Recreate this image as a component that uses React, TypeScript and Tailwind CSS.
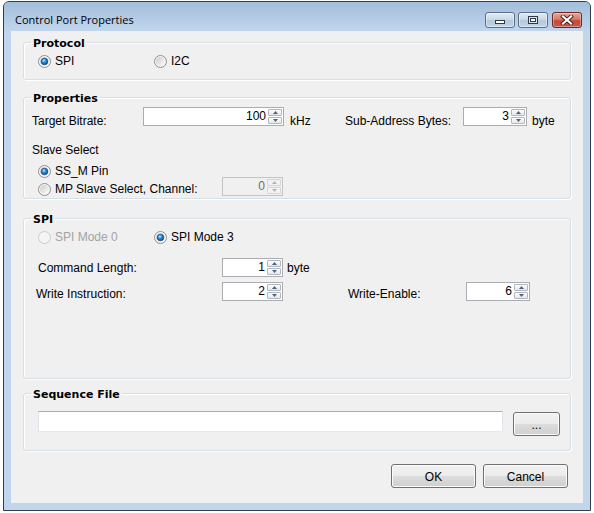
import React from "react";

type RadioProps = { checked?: boolean; disabled?: boolean };

function RadioGlyph({ checked, disabled }: RadioProps) {
  return (
    <svg width="13" height="13" viewBox="0 0 13 13" className="shrink-0">
      <defs>
        <linearGradient id="rb-face" x1="0" y1="0" x2="1" y2="1">
          <stop offset="0" stopColor="#cbcbcb" />
          <stop offset="1" stopColor="#fdfdfd" />
        </linearGradient>
        <radialGradient id="rb-dot" cx="0.4" cy="0.35" r="0.75">
          <stop offset="0" stopColor="#b9ecff" />
          <stop offset="0.4" stopColor="#2a8fe0" />
          <stop offset="1" stopColor="#0a3a78" />
        </radialGradient>
      </defs>
      <circle
        cx="6.5"
        cy="6.5"
        r="6"
        fill={disabled ? "#f4f4f4" : "#f6f6f6"}
        stroke={disabled ? "#cacaca" : "#8e8f8f"}
      />
      {!disabled && <circle cx="6.5" cy="6.5" r="4.5" fill="url(#rb-face)" />}
      {checked && (
        <circle cx="6.5" cy="6.5" r="3.3" fill="url(#rb-dot)" stroke="#1b3e6c" strokeWidth="0.7" />
      )}
    </svg>
  );
}

function Radio({
  label,
  checked,
  disabled,
  className = "",
}: RadioProps & { label: string; className?: string }) {
  return (
    <div className={`flex h-[13px] items-center gap-[4px] ${className}`}>
      <RadioGlyph checked={checked} disabled={disabled} />
      <span className={`leading-[13px] ${disabled ? "text-[#a3a3a3]" : ""}`}>{label}</span>
    </div>
  );
}

function Arrow({ up, disabled }: { up?: boolean; disabled?: boolean }) {
  return (
    <svg width="5" height="3" viewBox="0 0 5 3">
      <path d={up ? "M2.5 0 5 3H0z" : "M0 0h5L2.5 3z"} fill={disabled ? "#b5b5b5" : "#4d6185"} />
    </svg>
  );
}

function Spinner({
  value,
  className,
  disabled,
}: {
  value: string;
  className: string;
  disabled?: boolean;
}) {
  const half = disabled
    ? "border-[#d6d6d6] bg-[#f2f2f2]"
    : "border-[#b2b6bd] bg-[linear-gradient(#fdfdfd,#e4e7eb)]";
  return (
    <div
      className={`flex h-[19px] shrink-0 border ${
        disabled ? "border-[#c4c4c4] bg-[#f0f0f0] text-[#6d6d6d]" : "border-[#abadb3] bg-white"
      } ${className}`}
    >
      <div className="flex-1 pr-[2px] text-right leading-[17px]">{value}</div>
      <div className="flex w-[15px] flex-col gap-[1px] py-[1px] pr-[1px]">
        <div className={`flex flex-1 items-center justify-center rounded-[1px] border ${half}`}>
          <Arrow up disabled={disabled} />
        </div>
        <div className={`flex flex-1 items-center justify-center rounded-[1px] border ${half}`}>
          <Arrow disabled={disabled} />
        </div>
      </div>
    </div>
  );
}

function PushButton({ children, className }: { children: React.ReactNode; className: string }) {
  return (
    <div
      className={`flex shrink-0 items-center justify-center rounded-[3px] border border-[#707070] bg-[linear-gradient(#f2f2f2_0%,#ebebeb_50%,#dddddd_50%,#cfcfcf_100%)] pt-[1px] leading-[14px] shadow-[inset_0_0_0_1px_#fbfbfb] ${className}`}
    >
      {children}
    </div>
  );
}

function Group({
  title,
  className,
  children,
}: {
  title: string;
  className: string;
  children: React.ReactNode;
}) {
  return (
    <fieldset
      className={`rounded-[3px] border border-[#d5dfe5] shadow-[inset_1px_1px_0_#ffffff,1px_1px_0_#ffffff] ${className}`}
    >
      <legend className="ml-[7px] h-[14px] px-[2px] font-['DejaVu_Sans',sans-serif] text-[11px] font-bold leading-[14px]">
        <span className="block translate-y-[2px]">{title}</span>
      </legend>
      {children}
    </fieldset>
  );
}

function CaptionButton({ kind }: { kind: "min" | "max" | "close" }) {
  if (kind === "close") {
    return (
      <div className="ml-[1px] flex h-[16px] w-[30px] items-center justify-center rounded-[3px] border border-[#6b2a24] bg-[linear-gradient(#e6a597_0%,#d67a6b_45%,#c44a3c_55%,#c9584a_100%)] shadow-[inset_0_0_0_1px_rgba(255,255,255,0.35)]">
        <svg width="14" height="10" viewBox="0 0 14 10">
          <path d="M3 1.5 11 8.5M11 1.5 3 8.5" stroke="#4a1e1a" strokeWidth="4" strokeLinecap="square" />
          <path d="M3 1.5 11 8.5M11 1.5 3 8.5" stroke="#ffffff" strokeWidth="2.2" strokeLinecap="square" />
        </svg>
      </div>
    );
  }
  return (
    <div className="flex h-[16px] w-[30px] items-center justify-center rounded-[3px] border border-[#5d6f88] bg-[linear-gradient(#e2eaf3_0%,#cbd9e9_45%,#b3c7de_55%,#c2d4e8_100%)] shadow-[inset_0_0_0_1px_rgba(255,255,255,0.45)]">
      {kind === "min" ? (
        <svg width="12" height="10" viewBox="0 0 12 10">
          <rect x="1.5" y="5.5" width="9" height="3" fill="#ffffff" stroke="#2e3a4c" />
        </svg>
      ) : (
        <svg width="12" height="10" viewBox="0 0 12 10">
          <rect x="1.5" y="1.5" width="9" height="7" fill="#dbe5f0" stroke="#2e3a4c" />
          <rect x="3.5" y="3.5" width="5" height="3" fill="#ffffff" stroke="#2e3a4c" />
        </svg>
      )}
    </div>
  );
}

export default function App() {
  return (
    <div className="h-[513px] w-[594px] overflow-hidden bg-white font-['Liberation_Sans',Arial,sans-serif] text-[12px] text-black">
      <div className="ml-[3px] mt-[1px] flex h-[510px] w-[588px] flex-col rounded-t-[6px] border border-[#353d47] bg-[#c1d6ec]">
        {/* caption */}
        <div className="flex h-[29px] shrink-0 items-start rounded-t-[5px] bg-[linear-gradient(180deg,#a3bedb_0%,#b3cbe5_55%,#c1d6ec_100%)] pr-[8px]">
          <div className="flex-1 pl-[11px] pt-[10px] font-['Open_Sans',sans-serif] text-[11px] leading-[15px] text-black">
            Control Port Properties
          </div>
          <div className="flex gap-[3px] pt-[10px]">
            <CaptionButton kind="min" />
            <CaptionButton kind="max" />
            <CaptionButton kind="close" />
          </div>
        </div>

        {/* client area */}
        <div className="flex-1 px-[7px] pb-[7px]">
          <div className="flex h-full flex-col bg-[#f0f0f0] px-[12px] pt-[4px]">
            <Group title="Protocol" className="h-[45px]">
              <div className="flex pl-[14px] pt-[6px]">
                <Radio label="SPI" checked className="w-[116px]" />
                <Radio label="I2C" />
              </div>
            </Group>

            <Group title="Properties" className="mt-[10px] h-[109px]">
              <div className="mt-[3px] flex items-start pl-[8px]">
                <div className="w-[111px] shrink-0 pt-[7px] leading-[14px]">Target Bitrate:</div>
                <Spinner value="100" className="w-[141px]" />
                <div className="ml-[6px] w-[55px] shrink-0 pt-[7px] leading-[14px]">kHz</div>
                <div className="w-[118px] shrink-0 pt-[7px] leading-[14px]">Sub-Address Bytes:</div>
                <Spinner value="3" className="w-[64px]" />
                <div className="ml-[5px] pt-[7px] leading-[14px]">byte</div>
              </div>
              <div className="mt-[15px] pl-[8px] leading-[14px]">Slave Select</div>
              <div className="mt-[8px] pl-[14px]">
                <Radio label="SS_M Pin" checked />
              </div>
              <div className="-mt-[1px] flex items-start pl-[14px]">
                <div className="w-[184px] shrink-0 pt-[6px]">
                  <Radio label="MP Slave Select, Channel:" />
                </div>
                <Spinner value="0" className="w-[61px]" disabled />
              </div>
            </Group>

            <Group title="SPI" className="mt-[12px] h-[168px]">
              <div className="mt-[6px] flex pl-[14px]">
                <Radio label="SPI Mode 0" disabled className="w-[116px]" />
                <Radio label="SPI Mode 3" checked />
              </div>
              <div className="mt-[14px] flex items-start pl-[14px]">
                <div className="w-[184px] shrink-0 pt-[3px] leading-[14px]">Command Length:</div>
                <Spinner value="1" className="w-[61px]" />
                <div className="ml-[4px] pt-[3px] leading-[14px]">byte</div>
              </div>
              <div className="mt-[5px] flex items-start pl-[12px]">
                <div className="w-[186px] shrink-0 pt-[5px] leading-[14px]">Write Instruction:</div>
                <Spinner value="2" className="w-[61px]" />
                <div className="ml-[65px] w-[118px] shrink-0 pt-[5px] leading-[14px]">Write-Enable:</div>
                <Spinner value="6" className="w-[64px]" />
              </div>
            </Group>

            <Group title="Sequence File" className="mt-[7px] h-[65px]">
              <div className="mt-[11px] flex items-start pl-[14px]">
                <div className="h-[21px] w-[465px] shrink-0 border border-b-[#e3e9ef] border-l-[#e2e3ea] border-r-[#e2e3ea] border-t-[#abadb3] bg-white" />
                <PushButton className="ml-[10px] mt-[1px] h-[24px] w-[47px]">...</PushButton>
              </div>
            </Group>

            <div className="mt-[13px] flex justify-end gap-[7px] pr-[3px]">
              <PushButton className="h-[24px] w-[85px]">OK</PushButton>
              <PushButton className="h-[24px] w-[85px]">Cancel</PushButton>
            </div>
          </div>
        </div>
      </div>
    </div>
  );
}
